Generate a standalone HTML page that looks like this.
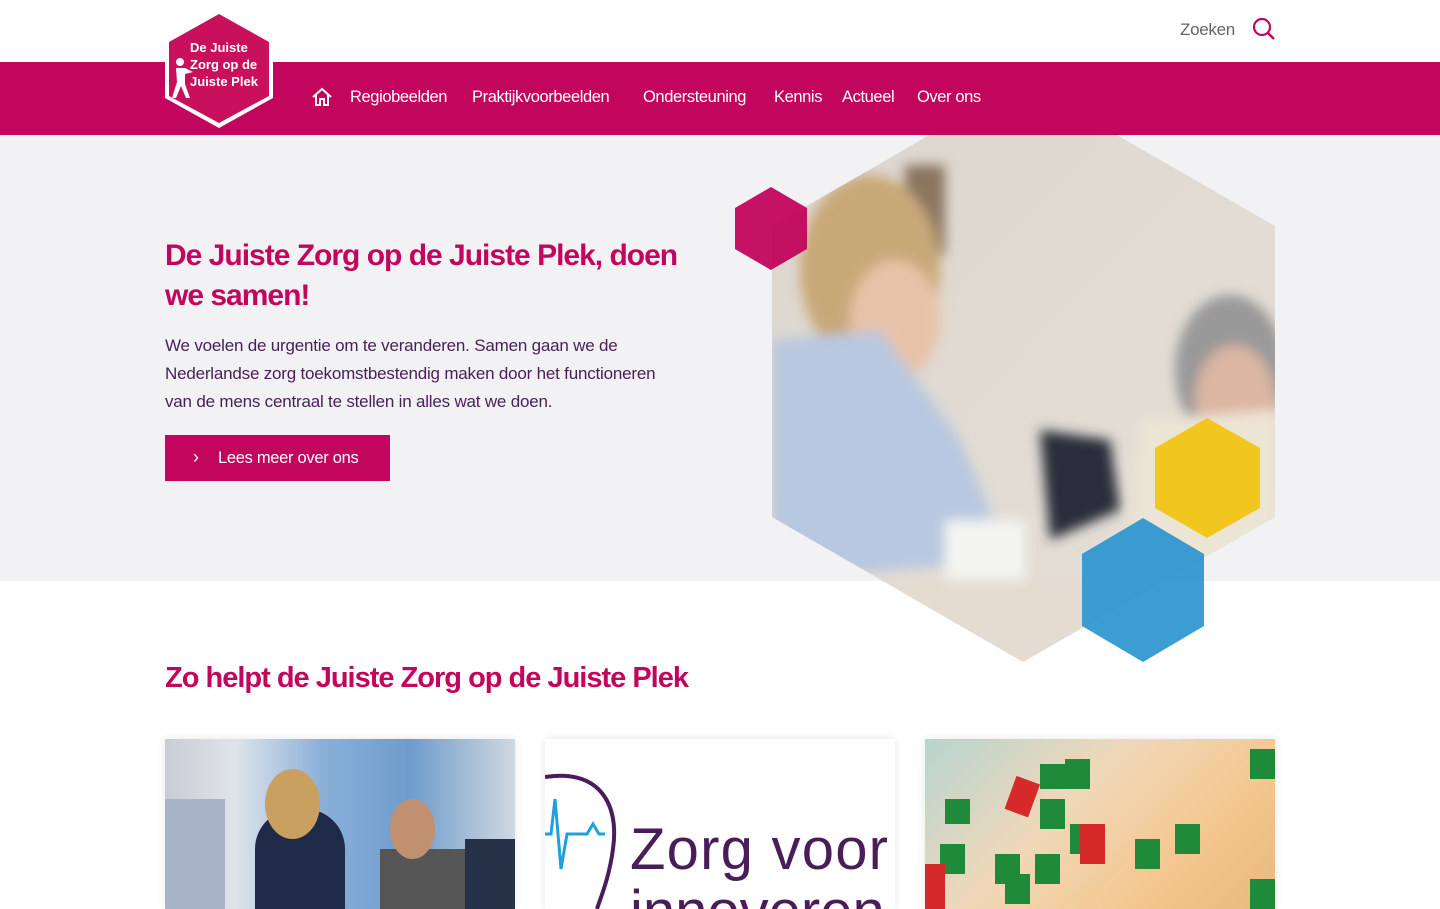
<!DOCTYPE html>
<html><head><meta charset="utf-8"><style>
*{margin:0;padding:0;box-sizing:border-box}
body{width:1440px;height:900px;overflow:hidden;background:#fff;font-family:"Liberation Sans",sans-serif;position:relative}
.zoek{position:absolute;left:1180px;top:20px;font-size:17px;color:#666;letter-spacing:-0.3px}
.nav{position:absolute;top:62px;left:0;width:1440px;height:73px;background:#c2055d;z-index:2}
.nav a{position:absolute;top:26px;color:#fff;font-size:16.5px;letter-spacing:-0.4px;text-decoration:none}
.hero{position:absolute;top:135px;left:0;width:1440px;height:446px;background:#f2f2f4}
h1{position:absolute;left:165px;top:236px;width:540px;font-size:30px;line-height:40px;color:#c2055d;font-weight:bold;letter-spacing:-1px}
.p{position:absolute;left:165px;top:332px;width:515px;font-size:17px;line-height:28px;color:#4a1d5a;letter-spacing:-0.2px}
.btn{position:absolute;left:165px;top:435px;width:225px;height:46px;background:#c2055d;color:#fff;font-size:16.5px;line-height:46px;padding-left:53px;letter-spacing:-0.3px}
h2{position:absolute;left:165px;top:662px;font-size:29px;color:#c2055d;font-weight:bold;letter-spacing:-1px}
.card{position:absolute;top:739px;width:350px;height:170px;box-shadow:0 0 8px rgba(0,0,0,.1);overflow:hidden}
</style></head><body>
<div class="zoek">Zoeken</div>
<svg style="position:absolute;left:1252px;top:17px" width="24" height="24" viewBox="0 0 24 24"><circle cx="10" cy="10" r="8" fill="none" stroke="#c2055d" stroke-width="2.2"/><line x1="16" y1="16" x2="22" y2="22" stroke="#c2055d" stroke-width="2.4"/></svg>
<div class="hero"></div>
<svg style="position:absolute;left:0;top:0" width="1440" height="900">
<defs><clipPath id="h"><polygon points="1023,81 1275,226 1275,517 1023,662 772,517 772,226"/></clipPath>
<linearGradient id="g" x1="0" y1="0" x2="1" y2="1"><stop offset="0" stop-color="#dcd6ce"/><stop offset="1" stop-color="#e6e0d8"/></linearGradient>
<filter id="b"><feGaussianBlur stdDeviation="6"/></filter></defs>
<g clip-path="url(#h)"><rect x="772" y="135" width="503" height="530" fill="url(#g)"/>
<g filter="url(#b)">
<rect x="905" y="165" width="40" height="90" fill="#8a7560"/>
<ellipse cx="870" cy="270" rx="70" ry="95" fill="#c9a878"/>
<ellipse cx="895" cy="320" rx="45" ry="60" fill="#e8c2a8"/>
<path d="M772 340 L880 330 L960 440 L1010 560 L772 580 Z" fill="#b8c8e0"/>
<ellipse cx="1230" cy="370" rx="55" ry="75" fill="#999"/>
<ellipse cx="1235" cy="400" rx="40" ry="55" fill="#dcb6a2"/>
<path d="M1140 420 L1275 410 L1275 600 L1130 600 Z" fill="#ece5d5"/>
<path d="M1040 430 L1110 440 L1120 510 L1050 540 Z" fill="#2a2e3a"/>
<rect x="945" y="520" width="80" height="80" fill="#f4f4f2"/>
<rect x="772" y="580" width="503" height="90" fill="#e4dcd0"/></g></g>
<polygon points="771,187 807,208 807,249 771,270 735,249 735,208" fill="#c2055d" opacity=".95"/>
<polygon points="1207,418 1260,448 1260,508 1207,538 1155,508 1155,448" fill="#f1c40f" opacity=".92"/>
<polygon points="1143,518 1204,554 1204,626 1143,662 1082,626 1082,554" fill="#2b95cf" opacity=".92"/>
</svg>
<div class="nav">
<svg style="position:absolute;left:311px;top:24px" width="22" height="22" viewBox="0 0 22 22"><path d="M2 11 L11 3 L20 11 M5 9 V19 H9 V13 H13 V19 H17 V9" fill="none" stroke="#fff" stroke-width="2"/></svg>
<a style="left:350px">Regiobeelden</a><a style="left:472px">Praktijkvoorbeelden</a><a style="left:643px">Ondersteuning</a><a style="left:774px">Kennis</a><a style="left:842px">Actueel</a><a style="left:917px">Over ons</a>
</div>
<svg style="position:absolute;left:165px;top:10px;z-index:3" width="108" height="118" viewBox="0 0 108 118"><polygon points="54,0 108,30 108,88 54,118 0,88 0,30" fill="#fff"/><polygon points="54,4 104,32 104,86 54,113 4,86 4,32" fill="#c8105d"/>
<text x="25" y="42" fill="#fff" font-size="13" font-weight="bold" font-family="Liberation Sans">De Juiste</text>
<text x="25" y="59" fill="#fff" font-size="13" font-weight="bold" font-family="Liberation Sans">Zorg op de</text>
<text x="25" y="76" fill="#fff" font-size="13" font-weight="bold" font-family="Liberation Sans">Juiste Plek</text>
<circle cx="15" cy="52" r="4" fill="#fff"/><path d="M11 58 H20 L28 62 L20 64 L20 74 L25 88 L21 88 L16 76 L11 88 L7 88 L12 72 Z" fill="#fff"/></svg>
<h1>De Juiste Zorg op de Juiste Plek, doen we samen!</h1>
<div class="p">We voelen de urgentie om te veranderen. Samen gaan we de Nederlandse zorg toekomstbestendig maken door het functioneren van de mens centraal te stellen in alles wat we doen.</div>
<div class="btn"><span style="position:absolute;left:28px;top:-1px;font-size:18px">›</span>Lees meer over ons</div>
<h2>Zo helpt de Juiste Zorg op de Juiste Plek</h2>
<div class="card" style="left:165px;background:linear-gradient(90deg,#c8ccd4 0,#dfe4ea 20%,#8ab0d8 45%,#6e9ccc 70%,#d0d8e0 100%)">
<div style="position:absolute;left:0;top:60px;width:60px;height:110px;background:#a8b4c8"></div>
<div style="position:absolute;left:90px;top:70px;width:90px;height:110px;background:#1e2a48;border-radius:40px 40px 0 0"></div>
<div style="position:absolute;left:100px;top:30px;width:55px;height:70px;background:#c9a060;border-radius:50%"></div>
<div style="position:absolute;left:215px;top:110px;width:90px;height:70px;background:#555"></div>
<div style="position:absolute;left:225px;top:60px;width:45px;height:60px;background:#c09070;border-radius:50%"></div>
<div style="position:absolute;left:300px;top:100px;width:50px;height:70px;background:#263248"></div></div>
<div class="card" style="left:545px;background:#fff">
<svg width="350" height="170"><path d="M0 38 C50 30 75 60 68 110 C64 140 55 160 52 170" fill="none" stroke="#4a1d5a" stroke-width="4"/><path d="M0 95 H6 L10 60 L16 130 L22 95 H42 L48 85 L54 95 H60" fill="none" stroke="#1fa0dc" stroke-width="3"/>
<text x="85" y="130" font-size="58" fill="#4a1d5a" font-family="Liberation Sans" textLength="258">Zorg voor</text><text x="85" y="192" font-size="58" fill="#4a1d5a" font-family="Liberation Sans">innoveren</text></svg></div>
<div class="card" style="left:925px;background:linear-gradient(135deg,#b8d4d0 0,#f0d8b8 40%,#f4c890 70%,#e8b880 100%)">
<svg width="350" height="170"><g fill="#1e8a3a"><rect x="20" y="60" width="25" height="25"/><rect x="115" y="25" width="25" height="25"/><rect x="140" y="20" width="25" height="30"/><rect x="115" y="60" width="25" height="30"/><rect x="145" y="85" width="25" height="30"/><rect x="15" y="105" width="25" height="30"/><rect x="70" y="115" width="25" height="30"/><rect x="110" y="115" width="25" height="30"/><rect x="210" y="100" width="25" height="30"/><rect x="250" y="85" width="25" height="30"/><rect x="325" y="10" width="25" height="30"/><rect x="80" y="135" width="25" height="30"/><rect x="325" y="140" width="25" height="30"/></g>
<g fill="#d62a2a"><rect x="85" y="40" width="25" height="35" transform="rotate(20 97 57)"/><rect x="155" y="85" width="25" height="40"/><rect x="0" y="125" width="20" height="45"/></g></svg></div>
</body></html>
